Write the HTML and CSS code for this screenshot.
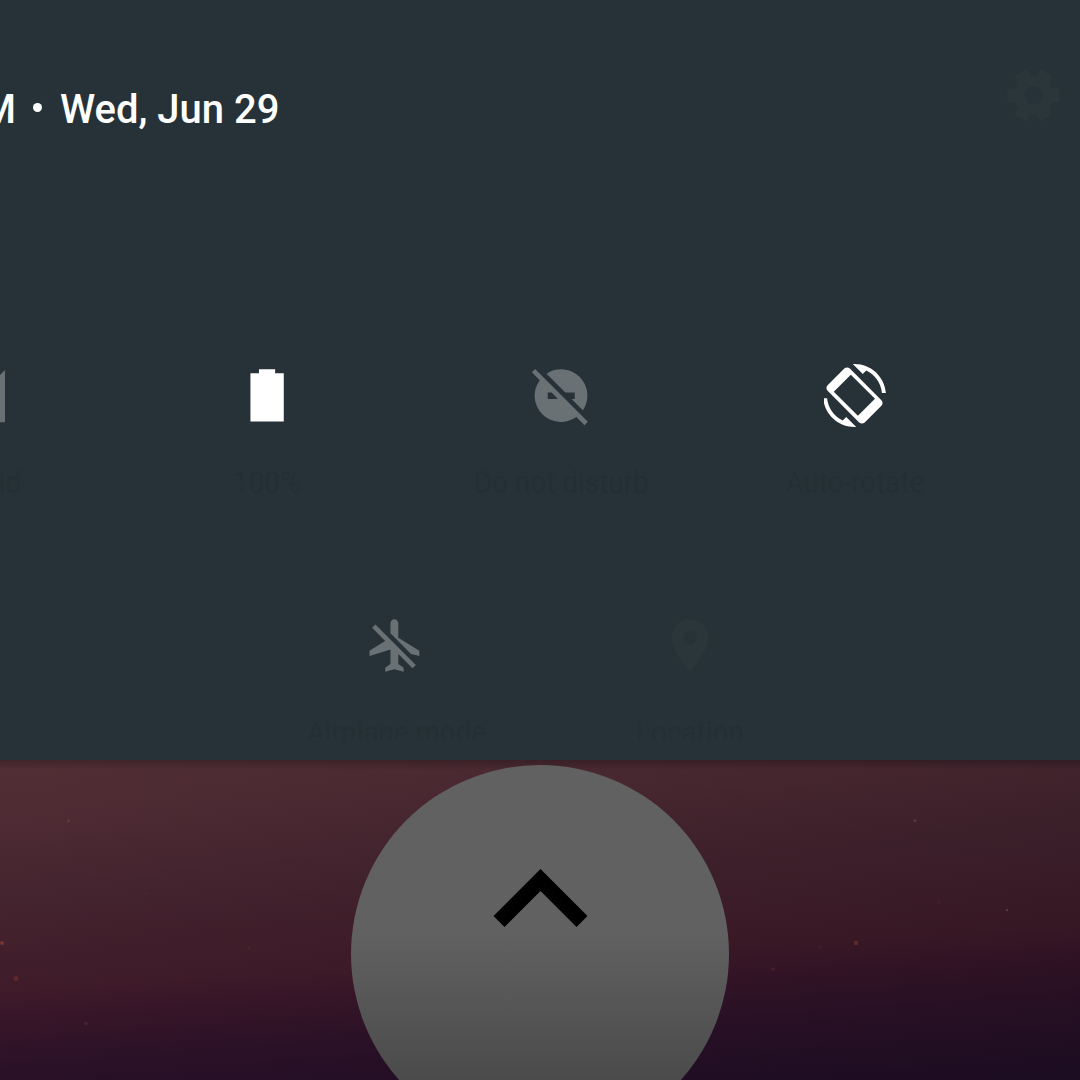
FILE: index.html
```html
<!DOCTYPE html>
<html lang="en">
<head>
<meta charset="utf-8">
<title>Quick settings</title>
<link rel="stylesheet" href="styles.css">
</head>
<body>
<main class="screen">
  <section class="panel">
    <header class="header">
      <div class="date"><span class="time">PM</span><i class="dot"></i><span class="day">Wed, Jun 29</span></div>
      <svg class="icon ghost" viewBox="0 0 24 24"><path transform="rotate(90 12 12)" d="M19.43 12.98c.04-.32.07-.64.07-.98s-.03-.66-.07-.98l2.11-1.65c.19-.15.24-.42.12-.64l-2-3.46c-.12-.22-.39-.3-.61-.22l-2.49 1c-.52-.4-1.08-.73-1.69-.98l-.38-2.65C14.46 2.18 14.25 2 14 2h-4c-.25 0-.46.18-.49.42l-.38 2.65c-.61.25-1.17.59-1.69.98l-2.49-1c-.23-.09-.49 0-.61.22l-2 3.46c-.13.22-.07.49.12.64l2.11 1.65c-.04.32-.07.65-.07.98s.03.66.07.98l-2.11 1.65c-.19.15-.24.42-.12.64l2 3.46c.12.22.39.3.61.22l2.49-1c.52.4 1.08.73 1.69.98l.38 2.65c.03.24.24.42.49.42h4c.25 0 .46-.18.49-.42l.38-2.65c.61-.25 1.17-.59 1.69-.98l2.49 1c.23.09.49 0 .61-.22l2-3.46c.12-.22.07-.49-.12-.64l-2.11-1.65zM12 15.5c-1.93 0-3.5-1.57-3.5-3.5s1.57-3.5 3.5-3.5 3.5 1.57 3.5 3.5-1.57 3.5-3.5 3.5z"/></svg>
    </header>
    <div class="row row-first">
      <div class="tile">
        <svg class="icon dim" viewBox="0 0 24 24"><path d="M4.2 22.15H24.3V1.95z"/></svg>
        <span class="label"><span class="fit">Android</span></span>
      </div>
      <div class="tile">
        <svg class="icon on" viewBox="0.15 0 24 24"><path d="M8.9 2h6.15v1.55h3.3v18.4H5.65V3.55H8.9z"/></svg>
        <span class="label"><span class="fit">100%</span></span>
      </div>
      <div class="tile">
        <svg class="icon dim" viewBox="0.15 0 24 24"><path d="M2.1 1.9 22.2 22l-1.3 1.3-3.1-3.15A10 10 0 0 1 3.85 6.15l-3-3zM6.9 10.9v2.4h3.9l-2.4-2.4z"/><path d="M6.45 3.7A10 10 0 0 1 20.3 17.6L16 13.3h1.2v-2.4h-3.6z"/></svg>
        <span class="label"><span class="fit">Do not disturb</span></span>
      </div>
      <div class="tile">
        <svg class="icon on" viewBox="0.38 0 24 24"><path fill-rule="evenodd" d="M16.48 2.52c3.27 1.55 5.61 4.72 5.97 8.48h1.5C23.44 4.84 18.29 0 12 0l-.66.03 3.81 3.81 1.33-1.32zM10.23 1.75c-.59-.59-1.54-.59-2.12 0L1.75 8.11c-.59.59-.59 1.54 0 2.12l12.02 12.02c.59.59 1.54.59 2.12 0l6.36-6.36c.59-.59.59-1.54 0-2.12L10.23 1.75zM13.3 19.75 4.1 10.55l6.5-6.5 9.2 9.2zM7.52 21.48C4.25 19.94 1.91 16.76 1.55 13H.05C.56 19.16 5.71 24 12 24l.66-.03-3.81-3.81-1.33 1.32z"/></svg>
        <span class="label"><span class="fit">Auto-rotate</span></span>
      </div>
    </div>
    <div class="row row-second">
      <div class="tile">
        <svg class="icon dim" viewBox="0.3 0 24 24"><path d="M13 9V3.5c0-.83-.67-1.5-1.5-1.5S10 2.67 10 3.5v3.88l7.83 7.83L21 16v-2l-8-5zM3 5.27l4.99 4.99L2 14v2l8-2.5V19l-2 1.5V22l3.5-1 3.5 1v-1.5L13 19v-3.73l5.4 5.4 1.27-1.27L4.27 4 3 5.27z"/></svg>
        <span class="label"><span class="fit">Airplane mode</span></span>
      </div>
      <div class="tile">
        <svg class="icon ghost" viewBox="0.15 0 24 24"><path d="M12 2C8.13 2 5 5.13 5 9c0 5.25 7 13 7 13s7-7.75 7-13c0-3.87-3.13-7-7-7zm0 9.5c-1.38 0-2.5-1.12-2.5-2.5s1.12-2.5 2.5-2.5 2.5 1.12 2.5 2.5-1.12 2.5-2.5 2.5z"/></svg>
        <span class="label"><span class="fit">Location</span></span>
      </div>
    </div>
  </section>
  <section class="wallpaper">
    <svg class="scene" viewBox="0 760 1080 320">
      <defs>
        <linearGradient id="button" gradientUnits="userSpaceOnUse" x1="0" y1="930" x2="0" y2="1080"><stop offset="0" stop-color="#616161"/><stop offset="1" stop-color="#4b4b4b"/></linearGradient>
      </defs>
      <g fill="#a84a34">
        <circle cx="68.5" cy="821" r="1.5" opacity=".35"/>
        <circle cx="2" cy="943" r="2" opacity=".5"/>
        <circle cx="16" cy="978.5" r="2.5" opacity=".28"/>
        <circle cx="86" cy="1023.5" r="2" opacity=".2"/>
        <circle cx="249" cy="948" r="2" opacity=".1"/>
        <circle cx="146" cy="893" r="1.5" opacity=".1"/>
        <circle cx="856" cy="943" r="2.4" opacity=".32"/>
        <circle cx="773" cy="969" r="1.8" opacity=".2"/>
        <circle cx="820" cy="947" r="2" opacity=".08"/>
        <circle cx="939" cy="902" r="2" opacity=".08"/>
      </g>
      <g fill="#a08090">
        <circle cx="915" cy="820.5" r="1.5" opacity=".25"/>
        <circle cx="1007" cy="910" r="1.2" opacity=".3"/>
      </g>
      <circle cx="540" cy="954" r="189" fill="url(#button)"/>
      <path d="M540.5 869l47 47-11 11-36-36-36 36-11-11z"/>
    </svg>
  </section>
</main>
</body>
</html>
```
FILE: styles.css
```css
* { box-sizing: border-box; }
body { margin: 0; background: #000; font-family: Roboto, sans-serif; }
.screen { width: 1080px; height: 1080px; overflow: hidden; display: flex; flex-direction: column; }
.panel { height: 760px; flex: none; background: #273238; overflow: hidden; }
.header { height: 364px; padding: 63.5px 15px 0 0; display: flex; justify-content: space-between; align-items: flex-start; }
.date { width: 300px; margin-left: -20px; height: 92px; display: flex; justify-content: flex-end; align-items: center; padding-right: .5px; color: #fff; font-size: 40px; font-weight: 500; line-height: 47px; white-space: nowrap; }
.dot { width: 9px; height: 9px; border-radius: 50%; background: #fff; margin: -5px 18px 0 17px; flex: none; }
.icon { width: 63px; height: 63px; display: block; flex: none; }
.on { fill: #fff; }
.dim { fill: #697174; }
.ghost { fill: #2b363b; }
.row { display: flex; }
.row-first { height: 250px; margin-left: -174px; }
.row-second { height: 126px; margin-left: 249px; overflow: hidden; }
.tile { width: 294px; flex: none; display: flex; flex-direction: column; align-items: center; }
.label { margin-top: 35px; height: 40px; line-height: 40px; font-size: 32px; color: #242f35; white-space: nowrap; display: flex; justify-content: center; }
.row-second .label { height: 28px; overflow: hidden; }
.fit { transform: scaleX(.87); }
.wallpaper { flex: 1; background: linear-gradient(180deg, rgba(0,0,0,.22), transparent 10px), linear-gradient(90deg, transparent, rgba(18,8,16,.2)), linear-gradient(176.5deg, #522f36 0, #4e2b34 16%, #44242f 36%, #3f1b29 60%, #371529 68%, #2a1128 81%, #1e0d26 100%); }
.scene { width: 1080px; height: 320px; display: block; }
```
